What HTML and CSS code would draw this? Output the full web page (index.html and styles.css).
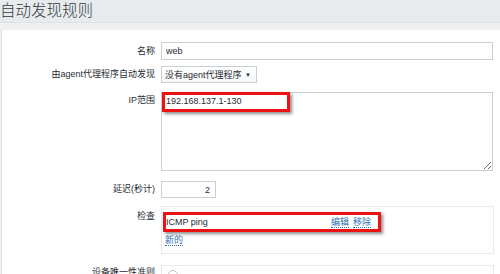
FILE: index.html
```html
<!DOCTYPE html>
<html lang="zh-CN">

<head>
    <meta charset="UTF-8">
    <meta name="viewport" content="width=device-width, initial-scale=1.0">
    <title>自动发现规则</title>
    <link rel="stylesheet" href="styles.css">
</head>

<body>

    <div class="page-header">
        <h1>自动发现规则</h1>
    </div>

    <div class="content">
        <div class="panel">

            <div class="form-row row-name">
                <label class="form-label">名称</label>
                <input type="text" class="text-input wide" value="web">
            </div>

            <div class="form-row row-proxy">
                <label class="form-label">由agent代理程序自动发现</label>
                <div class="select-box">
                    <span>没有agent代理程序</span>
                    <span class="arrow">▼</span>
                </div>
            </div>

            <div class="form-row row-ip">
                <label class="form-label top">IP范围</label>
                <div class="textarea-wrap">
                    <textarea class="ip-range">192.168.137.1-130</textarea>
                    <!-- annotation box -->
                    <div class="mark-box ip-mark"></div>
                </div>
            </div>

            <div class="form-row row-delay">
                <label class="form-label">延迟(秒计)</label>
                <input type="text" class="text-input short" value="2">
            </div>

            <div class="form-row row-checks">
                <label class="form-label top checks-label">检查</label>
                <div class="checks-box">
                    <div class="check-item mark-row">
                        <span class="check-name">ICMP ping</span>
                        <a href="#" class="link">编辑</a>
                        <a href="#" class="link">移除</a>
                    </div>
                    <a href="#" class="link new-link">新的</a>
                </div>
            </div>

            <div class="form-row row-unique">
                <label class="form-label top unique-label">设备唯一性准则</label>
                <div class="checks-box unique-box">
                    <span class="radio"></span>
                </div>
            </div>

        </div>
    </div>

</body>

</html>
```

FILE: styles.css
```css
body {
    margin: 0;
    width: 500px;
    height: 274px;
    overflow: hidden;
    font-family: "Liberation Sans", "Noto Sans CJK SC", sans-serif;
    font-size: 9px;
    color: #1f2c33;
    background-color: #eef0f2;
}

.page-header {
    height: 22px;
    background-color: #e8ebee;
    border-bottom: 1px solid #dce1e4;
}

h1 {
    margin: 0;
    padding-left: 0;
    font-size: 15.5px;
    font-weight: 300;
    line-height: 21px;
    color: #2f393f;
}

.content {
    padding: 7px 0 0 1px;
}

.panel {
    background-color: #fff;
    border-left: 1px solid #dfe3e6;
    padding-top: 12px;
    height: 232px;
    overflow: hidden;
}

.form-row {
    display: flex;
    align-items: flex-start;
}

.form-label {
    width: 153px;
    margin-right: 6px;
    text-align: right;
    line-height: 18px;
    flex-shrink: 0;
}

.form-label.top {
    line-height: 13px;
    padding-top: 2px;
}

.form-label.checks-label {
    padding-top: 4px;
}

.form-label.unique-label {
    padding-top: 1px;
}

.text-input {
    box-sizing: border-box;
    height: 18px;
    border: 1px solid #c9d0d4;
    padding: 0 4px;
    font-family: inherit;
    font-size: 9px;
    color: #1f2c33;
    outline: none;
}

.text-input.wide {
    width: 332px;
}

.text-input.short {
    width: 55px;
    height: 17px;
    text-align: right;
    padding-right: 5px;
}

.row-proxy {
    margin-top: 6px;
}

.row-proxy .form-label {
    line-height: 17px;
}

.select-box {
    box-sizing: border-box;
    width: 96px;
    height: 17px;
    border: 1px solid #c9d0d4;
    display: flex;
    align-items: center;
    justify-content: space-between;
    padding: 0 5px 0 3px;
    background: linear-gradient(#fff, #f7f8f9);
}

.select-box .arrow {
    font-size: 6px;
    color: #333;
}

.row-ip {
    margin-top: 9px;
}

.textarea-wrap {
    position: relative;
}

.ip-range {
    display: block;
    box-sizing: border-box;
    width: 332px;
    height: 79px;
    margin: 0;
    border: 1px solid #c9d0d4;
    padding: 3px 4px;
    font-family: inherit;
    font-size: 9px;
    line-height: 11px;
    color: #1f2c33;
    outline: none;
}

.mark-box {
    position: absolute;
    border: 3px solid #ee1111;
    box-shadow: 2px 2px 3px rgba(0, 0, 0, 0.45);
}

.ip-mark {
    left: 1px;
    top: 0;
    width: 122px;
    height: 14px;
}

.row-delay {
    margin-top: 10px;
}

.row-delay .form-label {
    line-height: 17px;
}

.row-checks {
    margin-top: 8px;
}

.checks-box {
    box-sizing: border-box;
    width: 333px;
    height: 48px;
    border: 1px solid #e6e9eb;
    padding: 5px 0 0 1px;
}

.mark-row {
    box-sizing: border-box;
    width: 218px;
    height: 20px;
    border: 3px solid #ee1111;
    box-shadow: 2px 2px 3px rgba(0, 0, 0, 0.45);
    display: flex;
    align-items: center;
    padding-right: 7px;
}

.check-name {
    flex: 1;
}

.link {
    color: #2b6fb3;
    text-decoration: none;
    border-bottom: 1px dotted #2b6fb3;
    line-height: 10px;
}

.check-item .link + .link {
    margin-left: 4px;
}

.new-link {
    display: inline-block;
    margin: 3px 0 0 2px;
}

.row-unique {
    margin-top: 11px;
}

.unique-box {
    height: 40px;
    padding: 4px 0 0 6px;
}

.radio {
    display: block;
    width: 8px;
    height: 8px;
    border: 1px solid #b8c0c5;
    border-radius: 50%;
}
```
